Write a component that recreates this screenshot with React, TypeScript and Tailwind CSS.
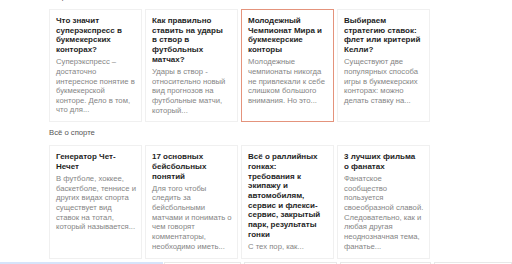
import React from "react";

type Card = { title: string[]; desc: string[]; active?: boolean };

const row1: Card[] = [
  {
    title: ["Что значит", "суперэкспресс в", "букмекерских", "конторах?"],
    desc: ["Суперэкспресс –", "достаточно", "интересное понятие в", "букмекерской", "конторе. Дело в том,", "что для..."],
  },
  {
    title: ["Как правильно", "ставить на удары", "в створ в", "футбольных", "матчах?"],
    desc: ["Удары в створ -", "относительно новый", "вид прогнозов на", "футбольные матчи,", "который..."],
  },
  {
    title: ["Молодежный", "Чемпионат Мира и", "букмекерские", "конторы"],
    desc: ["Молодежные", "чемпионаты никогда", "не привлекали к себе", "слишком большого", "внимания. Но это..."],
    active: true,
  },
  {
    title: ["Выбираем", "стратегию ставок:", "флет или критерий", "Келли?"],
    desc: ["Существуют две", "популярных способа", "игры в букмекерских", "конторах: можно", "делать ставку на..."],
  },
];

const row2: Card[] = [
  {
    title: ["Генератор Чет-", "Нечет"],
    desc: ["В футболе, хоккее,", "баскетболе, теннисе и", "других видах спорта", "существует вид", "ставок на тотал,", "который называется..."],
  },
  {
    title: ["17 основных", "бейсбольных", "понятий"],
    desc: ["Для того чтобы", "следить за", "бейсбольными", "матчами и понимать о", "чем говорят", "комментаторы,", "необходимо иметь..."],
  },
  {
    title: ["Всё о раллийных", "гонках:", "требования к", "экипажу и", "автомобилям,", "сервис и флекси-", "сервис, закрытый", "парк, результаты", "гонки"],
    desc: ["С тех пор, как..."],
  },
  {
    title: ["3 лучших фильма", "о фанатах"],
    desc: ["Фанатское", "сообщество", "пользуется", "своеобразной славой.", "Следовательно, как и", "любая другая", "неоднозначная тема,", "фанатье..."],
  },
];

function CardBody({ c }: { c: Card }) {
  return (
    <>
      <div className="text-[8px] leading-[9.7px] font-bold text-[#1e1e1e] whitespace-nowrap">
        {c.title.map((t, i) => (
          <div key={i}>{t}</div>
        ))}
      </div>
      <div className="mt-[2.4px] text-[7.7px] leading-[9.65px] text-[#858585] whitespace-nowrap">
        {c.desc.map((t, i) => (
          <div key={i}>{t}</div>
        ))}
      </div>
    </>
  );
}

function CardView({ c }: { c: Card }) {
  if (c.active) {
    return (
      <div className="px-[6px] py-[6px] border border-[#e4937c]">
        <CardBody c={c} />
      </div>
    );
  }
  return (
    <div className="px-[6px] py-[6px] border border-[#f0f0f0]">
      <CardBody c={c} />
    </div>
  );
}

function Row({ cards }: { cards: Card[] }) {
  return (
    <div className="grid grid-cols-[repeat(4,93px)] gap-x-[3px]">
      {cards.map((c, i) => (
        <CardView key={i} c={c} />
      ))}
    </div>
  );
}

export default function App() {
  return (
    <div
      className="w-[512px] h-[264px] overflow-hidden bg-white"
      style={{ fontFamily: '"Liberation Sans", Arial, sans-serif' }}
    >
      <div className="pl-[49px]">
        <div className="-mt-[8px] h-[11px] text-[7.7px] leading-[9.6px] text-[#555]">
          Теория ставок
        </div>
        <div className="mt-[6px]">
          <Row cards={row1} />
        </div>
        <div className="mt-[6px] h-[11px] text-[7.7px] leading-[9.6px] text-[#555]">
          Всё о спорте
        </div>
        <div className="mt-[6px]">
          <Row cards={row2} />
        </div>
      </div>
      <div className="mt-[3px] flex items-start">
        <div className="w-[167px] h-[6px] bg-[#d6e4fa]"></div>
        <div className="ml-[1px] w-[78px] h-[6px] border border-[#e8e8e8]"></div>
        <div className="ml-[3px] w-[95px] h-[6px] border border-[#e8e8e8]"></div>
        <div className="ml-[3px] w-[93px] h-[6px] border border-[#e8e8e8]"></div>
        <div className="ml-[3px] w-[80px] h-[6px] border border-[#e8e8e8]"></div>
      </div>
    </div>
  );
}
